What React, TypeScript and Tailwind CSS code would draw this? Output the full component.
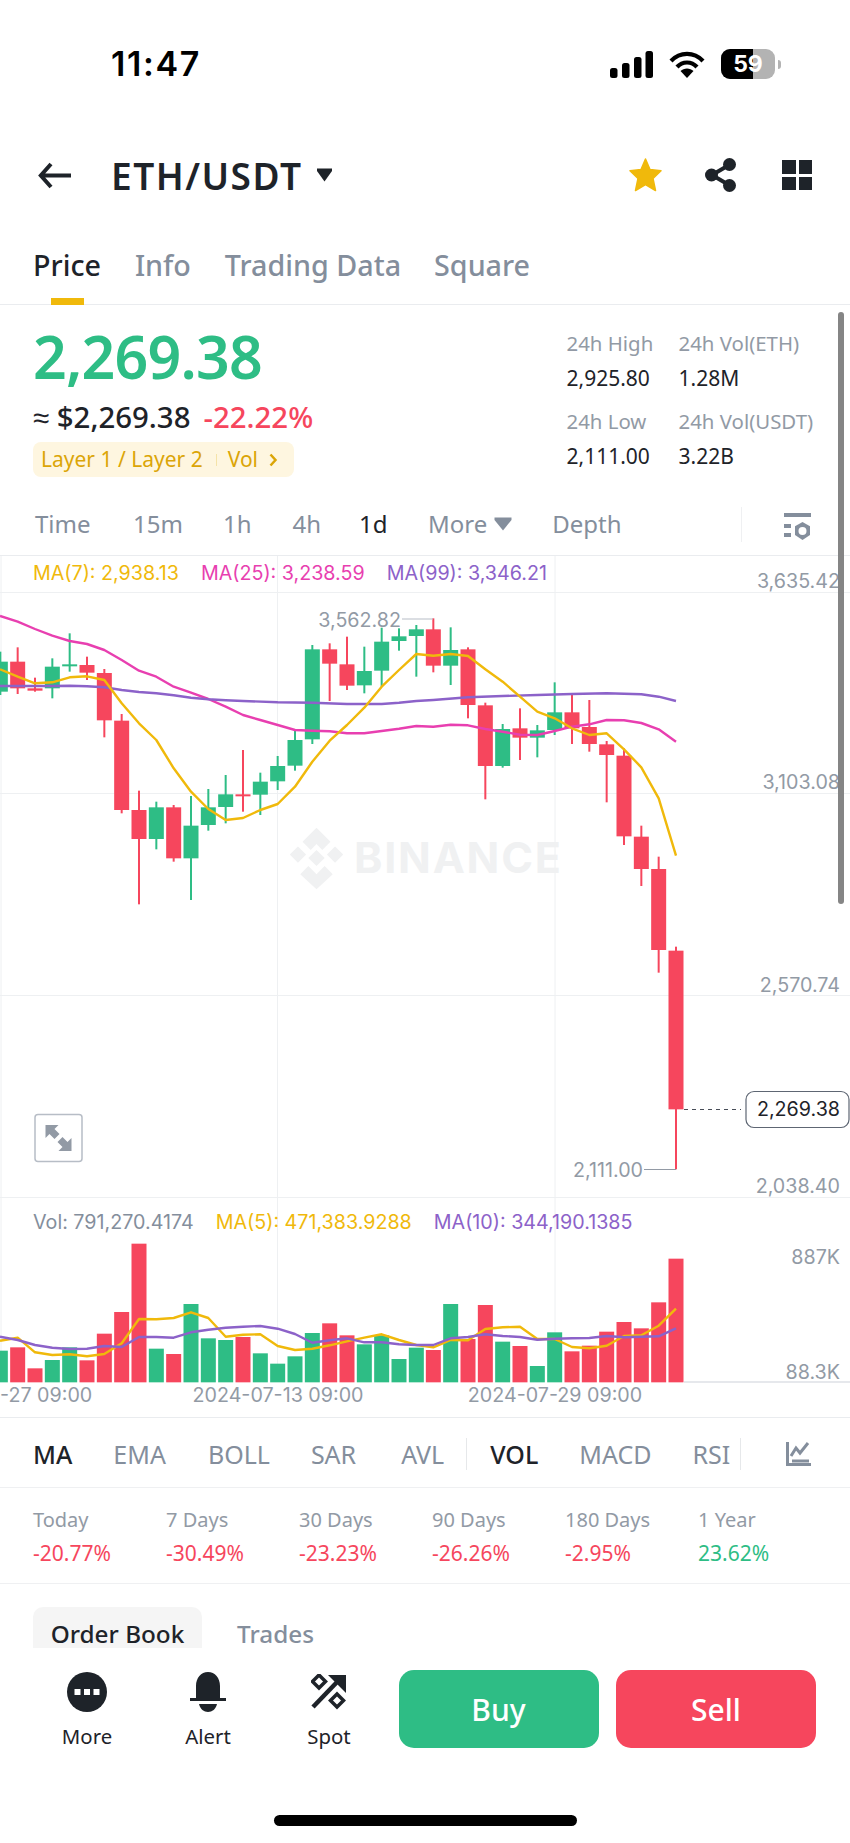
import React from "react";

const G = "#2EBD85";
const R = "#F6465D";
const Y = "#F0B90B";
const P = "#E83FB0";
const V = "#8C62C9";

type C = [number, number, number, number, number, "g" | "r"];
const candles: C[] = [
  [1, 275, 405, 305, 395, "g"], [53, 262, 402, 305, 385, "r"], [105, 353, 395, 385, 392, "r"], [157, 295, 415, 320, 385, "g"],
  [209, 220, 335, 313, 318, "g"], [261, 290, 360, 315, 338, "r"], [313, 327, 532, 339, 481, "r"], [365, 462, 760, 482, 750, "r"],
  [417, 692, 1033, 750, 837, "r"], [469, 725, 868, 742, 837, "g"], [521, 735, 905, 742, 895, "r"], [573, 708, 1020, 797, 895, "g"],
  [625, 687, 812, 742, 795, "g"], [677, 645, 790, 703, 741, "g"], [729, 570, 755, 703, 708, "r"], [781, 638, 765, 665, 704, "g"],
  [833, 588, 690, 618, 664, "g"], [885, 510, 632, 540, 617, "g"], [937, 255, 552, 268, 538, "g"], [989, 250, 423, 268, 311, "r"],
  [1041, 230, 390, 313, 377, "r"], [1093, 260, 400, 333, 376, "g"], [1145, 203, 380, 245, 332, "g"], [1197, 205, 272, 229, 243, "g"],
  [1249, 195, 350, 208, 228, "g"], [1300, 175, 337, 208, 317, "r"], [1352, 202, 375, 270, 317, "g"], [1404, 262, 475, 268, 435, "r"],
  [1456, 428, 718, 436, 618, "r"], [1508, 492, 623, 507, 618, "g"], [1560, 445, 600, 505, 533, "r"], [1612, 495, 592, 511, 533, "g"],
  [1664, 367, 525, 457, 510, "g"], [1716, 403, 552, 457, 505, "r"], [1768, 420, 575, 501, 552, "r"], [1820, 543, 727, 553, 585, "r"],
  [1872, 565, 855, 587, 829, "r"], [1924, 797, 978, 830, 927, "r"], [1976, 890, 1238, 927, 1170, "r"], [2028, 1160, 1828, 1172, 1648, "r"],
];

const pts = (a: number[][], base = 560) => a.map(([x, y]) => `${(x / 3).toFixed(1)},${(base + y / 3).toFixed(1)}`).join(" ");

const ma7 = [[0,328],[53,350],[105,370],[157,367],[209,352],[261,349],[313,360],[365,430],[417,490],[469,540],[521,625],[573,695],[625,747],[677,780],[729,774],[781,750],[833,732],[885,680],[937,605],[989,542],[1041,495],[1093,443],[1145,380],[1197,330],[1249,282],[1300,287],[1352,282],[1404,288],[1456,328],[1508,365],[1560,410],[1612,455],[1664,475],[1716,505],[1768,525],[1820,520],[1872,568],[1924,622],[1976,715],[2028,887]];
const ma25 = [[0,168],[53,185],[105,207],[157,227],[209,243],[261,252],[313,270],[365,300],[417,332],[469,350],[521,380],[573,398],[625,417],[677,440],[729,465],[781,480],[833,495],[885,510],[937,512],[989,514],[1041,520],[1093,520],[1145,513],[1197,506],[1249,498],[1300,500],[1352,494],[1404,496],[1456,507],[1508,515],[1560,524],[1612,525],[1664,513],[1716,500],[1768,493],[1820,480],[1872,481],[1924,489],[1976,508],[2028,545]];
const ma99 = [[0,378],[53,378],[157,378],[209,377],[261,379],[313,382],[365,390],[417,396],[469,400],[521,406],[573,413],[625,418],[677,421],[729,423],[833,427],[937,428],[1041,432],[1145,432],[1197,428],[1249,423],[1300,420],[1404,412],[1508,408],[1612,405],[1716,402],[1820,400],[1924,403],[1976,410],[2028,423]];

const vols: [number, number, "g" | "r"][] = [
  [1,482,"g"],[53,472,"r"],[105,535,"r"],[157,510,"g"],[209,472,"g"],[261,511,"r"],[313,431,"r"],[365,366,"r"],[417,161,"r"],[469,476,"g"],[521,492,"r"],[573,342,"g"],[625,445,"g"],[677,450,"g"],[729,441,"r"],[781,490,"g"],[833,521,"g"],[885,499,"g"],[937,429,"g"],[989,400,"r"],[1041,436,"r"],[1093,463,"g"],[1145,436,"g"],[1197,507,"g"],[1249,473,"g"],[1300,480,"r"],[1352,342,"g"],[1404,447,"r"],[1456,345,"r"],[1508,455,"g"],[1560,468,"r"],[1612,528,"g"],[1664,427,"g"],[1716,484,"r"],[1768,467,"r"],[1820,425,"r"],[1872,396,"r"],[1924,415,"r"],[1976,337,"r"],[2028,206,"r"],
];
const v5 = [[0,452],[53,443],[105,487],[157,495],[209,493],[261,499],[313,492],[365,460],[417,387],[469,388],[521,384],[573,367],[625,384],[677,440],[729,434],[781,433],[833,468],[885,480],[937,476],[989,466],[1041,454],[1093,443],[1145,433],[1197,450],[1249,465],[1300,472],[1352,450],[1404,451],[1456,417],[1508,412],[1560,410],[1612,447],[1664,447],[1716,471],[1768,475],[1820,467],[1872,438],[1924,436],[1976,407],[2028,356]];
const v10 = [[0,440],[53,450],[105,465],[157,473],[209,477],[261,476],[313,468],[365,471],[417,441],[469,441],[521,443],[573,427],[625,419],[677,413],[729,410],[781,408],[833,416],[885,432],[937,458],[989,451],[1041,445],[1093,457],[1145,457],[1197,463],[1249,465],[1300,465],[1352,445],[1404,441],[1456,433],[1508,438],[1560,441],[1612,449],[1664,446],[1716,445],[1768,444],[1820,438],[1872,442],[1924,440],[1976,439],[2028,415]];

function Chart() {
  const axis = "font-['Inter',sans-serif] text-[19.7px] fill-[#929AA5]";
  return (
    <svg width={850} height={861} viewBox="0 556 850 861" className="block">
      {[592, 793, 995, 1197].map((y) => (
        <line key={y} x1={0} x2={850} y1={y + 0.5} y2={y + 0.5} stroke="#EEF0F2" strokeWidth={1} />
      ))}
      {[1, 277.5, 555].map((x) => (
        <line key={x} x1={x} x2={x} y1={556} y2={1382} stroke="#EEF0F2" strokeWidth={1} />
      ))}
      <g>
        <path transform="translate(316.5 858) scale(1.16) translate(-316.5 -858)" fill="#F0F1F2" d="M316.5 832 l12 12 -7 7 -5 -5 -5 5 -7 -7z M300.5 848 l7 7 -7 7 -7 -7z M332.5 848 l7 7 -7 7 -7 -7z M316.5 851 l7 7 -7 7 -7 -7z M309.5 865 l7 7 7 -7 7 7 -14 13 -14 -13z" />
        <text x={354} y={873} className="font-['Inter',sans-serif] text-[43px] font-bold tracking-[1.8px] fill-[#F0F1F2]">BINANCE</text>
      </g>
      {candles.map(([x, wt, wb, bt, bb, c]) => {
        const col = c === "g" ? G : R;
        const cx = x / 3;
        return (
          <g key={x}>
            <rect x={cx - 1} y={560 + wt / 3} width={2} height={(wb - wt) / 3} fill={col} />
            <rect x={cx - 7.5} y={560 + bt / 3} width={15} height={Math.max((bb - bt) / 3, 2)} fill={col} />
          </g>
        );
      })}
      <polyline points={pts(ma25)} fill="none" stroke={P} strokeWidth={2.4} strokeLinejoin="round" />
      <polyline points={pts(ma99)} fill="none" stroke={V} strokeWidth={2.4} strokeLinejoin="round" />
      <polyline points={pts(ma7)} fill="none" stroke={Y} strokeWidth={2.4} strokeLinejoin="round" />

      {vols.map(([x, t, c]) => (
        <rect key={x} x={x / 3 - 7.5} y={1190 + t / 3} width={15} height={(577 - t) / 3} fill={c === "g" ? G : R} />
      ))}
      <polyline points={pts(v5, 1190)} fill="none" stroke={Y} strokeWidth={2.4} strokeLinejoin="round" />
      <polyline points={pts(v10, 1190)} fill="none" stroke={V} strokeWidth={2.4} strokeLinejoin="round" />
      <line x1={684} x2={850} y1={1382} y2={1382} stroke="#E6E8EC" strokeWidth={2} />

      <text x={840} y={588} textAnchor="end" className={axis}>3,635.42</text>
      <text x={840} y={789} textAnchor="end" className={axis}>3,103.08</text>
      <text x={840} y={992} textAnchor="end" className={axis}>2,570.74</text>
      <text x={840} y={1193} textAnchor="end" className={axis}>2,038.40</text>
      <text x={840} y={1264} textAnchor="end" className={axis}>887K</text>
      <text x={840} y={1379} textAnchor="end" className={axis}>88.3K</text>

      <text x={401} y={627} textAnchor="end" className={axis}>3,562.82</text>
      <line x1={402} x2={433} y1={619} y2={619} stroke="#B7BDC6" strokeWidth={1} />
      <text x={643} y={1177} textAnchor="end" className={axis}>2,111.00</text>
      <line x1={644} x2={676} y1={1169.5} y2={1169.5} stroke="#929AA5" strokeWidth={1} />

      <line x1={684} x2={741} y1={1109.5} y2={1109.5} stroke="#474D57" strokeWidth={1} strokeDasharray="4 4" />
      <rect x={746} y={1091.5} width={103} height={36} rx={8} fill="#fff" stroke="#5E6673" strokeWidth={1.2} />
      <text x={840} y={1116} textAnchor="end" className="font-['Inter',sans-serif] text-[19.7px] fill-[#1E2329]">2,269.38</text>

      <text x={0} y={1402} className={axis}>-27 09:00</text>
      <text x={278} y={1402} textAnchor="middle" className={axis}>2024-07-13 09:00</text>
      <text x={555} y={1402} textAnchor="middle" className={axis}>2024-07-29 09:00</text>

      <rect x={35} y={1114.5} width={47} height={47} rx={3} fill="#fff" stroke="#B7BDC6" strokeWidth={1.5} />
      <path fill="#929AA5" d="M45.5 1125h13l-4 4 5 5-5 5-5-5-4 4z M71.5 1151h-13l4-4-5-5 5-5 5 5 4-4z" />
    </svg>
  );
}

const periods: [string, string, string][] = [
  ["Today", "-20.77%", R], ["7 Days", "-30.49%", R], ["30 Days", "-23.23%", R],
  ["90 Days", "-26.26%", R], ["180 Days", "-2.95%", R], ["1 Year", "23.62%", G],
];

function Stat({ label, value, w }: { label: string; value: string; w: string }) {
  return (
    <div className={`${w} flex flex-col gap-[11px]`}>
      <div className="text-[20.4px] leading-[24px] text-[#929AA5] whitespace-nowrap">{label}</div>
      <div className="text-[21px] leading-[24px] text-[#1E2329] whitespace-nowrap">{value}</div>
    </div>
  );
}

export default function App() {
  return (
    <div className="relative w-[850px] h-[1843px] overflow-hidden bg-white flex flex-col font-['Noto_Sans',sans-serif] text-[#1E2329]">
      {/* status bar */}
      <div className="h-[128px] flex items-center justify-between pl-[111px] pr-[69px] shrink-0">
        <span className="font-['Inter',sans-serif] text-[34px] font-semibold text-black tracking-[1.6px] -mt-[2px]">11:47</span>
        <div className="flex items-center">
          <svg width={43} height={27} viewBox="0 0 43 27" className="mr-[16px]">
            <rect x={0} y={17} width={7.5} height={10} rx={2.5} fill="#000" />
            <rect x={12} y={12} width={7.5} height={15} rx={2.5} fill="#000" />
            <rect x={24} y={6} width={7.5} height={21} rx={2.5} fill="#000" />
            <rect x={35.5} y={0} width={7.5} height={27} rx={2.5} fill="#000" />
          </svg>
          <svg width={36} height={28} viewBox="0 0 36 28" className="mr-[16px]">
            <path fill="none" stroke="#000" strokeWidth={4.2} d="M2 11 C 11 1.5, 25 1.5, 34 11" />
            <path fill="none" stroke="#000" strokeWidth={4.2} d="M8 17 C 13.5 11, 22.5 11, 28 17" />
            <path fill="#000" d="M18 28 L11.5 21 C 15 17.5, 21 17.5, 24.5 21 Z" />
          </svg>
          <div className="relative w-[54px] h-[30px] rounded-[9px] bg-[#B3B3B3] overflow-hidden">
            <div className="h-full w-[32px] bg-black" />
            <span className="absolute inset-0 flex items-center justify-center font-['Inter',sans-serif] text-[23px] font-bold text-white">59</span>
          </div>
          <div className="w-[3px] h-[9px] ml-[3px] bg-[#B3B3B3] rounded-r-full" />
        </div>
      </div>

      {/* header */}
      <div className="h-[94px] flex items-center shrink-0">
        <svg width={33} height={27} viewBox="0 0 33 27" className="ml-[38px]">
          <path d="M13 2 L2.8 13.5 L13 25 M3 13.5 H33" fill="none" stroke="#1E2329" strokeWidth={4} />
        </svg>
        <span className="ml-[40px] text-[37px] font-semibold leading-none whitespace-nowrap tracking-[1.5px]">ETH/USDT</span>
        <svg width={17} height={14} viewBox="0 0 17 14" className="ml-[14px]">
          <path d="M1 0.5 H16 V3 L8.5 13.5 L1 3 Z" fill="#1E2329" strokeLinejoin="round" />
        </svg>
        <div className="ml-auto flex items-center pr-[38px]">
          <svg width={33} height={34} viewBox="0 0 33 34">
            <path d="M16.5 1 L21 11.5 L32 12.8 L24 20.5 L26.5 32.5 L16.5 26.5 L6.5 32.5 L9 20.5 L1 12.8 L12 11.5 Z" fill={Y} stroke={Y} strokeWidth={1.5} strokeLinejoin="round" />
          </svg>
          <svg width={31} height={34} viewBox="0 0 31 34" className="ml-[43px]">
            <path d="M7 17 L24 7 M7 17 L24 27" stroke="#1E2329" strokeWidth={4} fill="none" />
            <circle cx={6.5} cy={17} r={6.5} fill="#1E2329" />
            <circle cx={24.5} cy={6.5} r={6.5} fill="#1E2329" />
            <circle cx={24.5} cy={27.5} r={6.5} fill="#1E2329" />
          </svg>
          <div className="ml-[46px] grid grid-cols-2 gap-[3px] w-[30px]">
            <div className="h-[13.5px] bg-[#1E2329]" />
            <div className="h-[13.5px] bg-[#1E2329]" />
            <div className="h-[13.5px] bg-[#1E2329]" />
            <div className="h-[13.5px] bg-[#1E2329]" />
          </div>
        </div>
      </div>

      {/* tabs */}
      <div className="h-[83px] border-b border-[#EAECEF] flex items-start pl-[33px] gap-[34px] shrink-0 pt-[23px] text-[28.7px] leading-[40px] font-medium">
        <div className="relative h-[60px] text-[#1E2329]">
          Price
          <div className="absolute left-[18px] top-[52.5px] w-[33px] h-[7px] bg-[#F0B90B]" />
        </div>
        <div className="text-[#848E9C]">Info</div>
        <div className="text-[#848E9C]">Trading Data</div>
        <div className="text-[#848E9C] -ml-[1px]">Square</div>
      </div>

      {/* price */}
      <div className="h-[195px] relative flex shrink-0">
        <div className="pl-[33px] w-[566.5px] shrink-0">
          <div className="text-[59px] leading-[64px] font-semibold text-[#2EBD85] mt-[19px] tracking-[-0.8px]">2,269.38</div>
          <div className="flex items-baseline mt-[10px] text-[29.4px] leading-[38px]">
            <span className="font-medium">≈ $2,269.38</span>
            <span className="ml-[13px] font-medium text-[#F6465D]">-22.22%</span>
          </div>
          <div className="mt-[6px] w-[261px] h-[35px] rounded-[8px] bg-[#FEF6E0] flex items-center pl-[8px] text-[21px] text-[#DBA507] leading-none">
            <span>Layer 1 / Layer 2</span>
            <span className="ml-[13px] w-[1px] h-[12px] bg-[#F5E3A8]" />
            <span className="ml-[11px]">Vol</span>
            <svg width={9} height={14} viewBox="0 0 9 14" className="ml-[11px]">
              <path d="M1.5 1.5 L6.5 7 L1.5 12.5" fill="none" stroke="#DBA507" strokeWidth={2.5} />
            </svg>
          </div>
        </div>
        <div className="pt-[26px] flex flex-col gap-[19px]">
          <div className="flex">
            <Stat w="w-[112px]" label="24h High" value="2,925.80" />
            <Stat w="w-[140px]" label="24h Vol(ETH)" value="1.28M" />
          </div>
          <div className="flex">
            <Stat w="w-[112px]" label="24h Low" value="2,111.00" />
            <Stat w="w-[140px]" label="24h Vol(USDT)" value="3.22B" />
          </div>
        </div>
      </div>

      {/* intervals */}
      <div className="h-[56px] border-b border-[#EAECEF] flex items-start shrink-0 text-[24px] leading-[48px] text-[#848E9C] relative">
        <span className="ml-[35px] w-[54px]">Time</span>
        <span className="ml-[44px]">15m</span>
        <span className="ml-[40px]">1h</span>
        <span className="ml-[41px]">4h</span>
        <span className="ml-[38px] text-[#1E2329]">1d</span>
        <span className="ml-[40.5px]">More</span>
        <svg width={18} height={14} viewBox="0 0 18 14" className="ml-[7px] mt-[17px]">
          <path d="M0.5 0.5 H17.5 V3 L9 13.5 L0.5 3 Z" fill="#848E9C" />
        </svg>
        <span className="ml-[40px]">Depth</span>
        <div className="ml-auto mr-[39px] mt-[10px] flex items-center">
          <div className="w-[1px] h-[35px] bg-[#EFF0F2] mr-[42px] -mt-[3px]" />
          <svg width={27} height={27} viewBox="0 0 27 27">
            <rect x={0} y={0} width={27} height={4} fill="#848E9C" />
            <rect x={0} y={11} width={7} height={4} fill="#848E9C" />
            <rect x={0} y={20} width={7} height={4} fill="#848E9C" />
            <path d="M18.5 9 L26 13.2 V22 L18.5 27 L11 22 V13.2 Z" fill="#848E9C" />
            <circle cx={18.5} cy={18} r={4} fill="#fff" />
          </svg>
        </div>
      </div>

      {/* chart */}
      <div className="relative h-[861px] shrink-0 border-b border-[#EAECEF] box-content">
        <Chart />
        <div className="absolute left-[33px] top-[5px] flex gap-[22px] font-['Inter',sans-serif] text-[19.7px] leading-[24px] whitespace-nowrap">
          <span className="text-[#F0B90B]">MA(7): 2,938.13</span>
          <span className="text-[#E83FB0]">MA(25): 3,238.59</span>
          <span className="text-[#8C62C9]">MA(99): 3,346.21</span>
        </div>
        <div className="absolute left-[33px] top-[654px] flex gap-[22px] font-['Inter',sans-serif] text-[19.7px] leading-[24px] whitespace-nowrap">
          <span className="text-[#848E9C]">Vol: 791,270.4174</span>
          <span className="text-[#F0B90B]">MA(5): 471,383.9288</span>
          <span className="text-[#8C62C9]">MA(10): 344,190.1385</span>
        </div>
      </div>

      {/* indicators */}
      <div className="h-[70px] border-b border-[#EFF0F2] flex items-center pt-[3px] shrink-0 text-[25px] text-[#848E9C] leading-none">
        <span className="ml-[33px] text-[#1E2329] font-medium">MA</span>
        <span className="ml-[41px]">EMA</span>
        <span className="ml-[42px]">BOLL</span>
        <span className="ml-[41px]">SAR</span>
        <span className="ml-[45px]">AVL</span>
        <span className="ml-[22px] w-[1px] h-[32px] bg-[#E6E8EA]" />
        <span className="ml-[23px] text-[#1E2329] font-medium">VOL</span>
        <span className="ml-[41px]">MACD</span>
        <span className="ml-[41px]">RSI</span>
        <span className="ml-[10px] w-[1px] h-[32px] bg-[#E6E8EA]" />
        <svg width={25} height={24} viewBox="0 0 25 24" className="ml-[45px]">
          <path d="M1.5 0 V22.5 H25" fill="none" stroke="#848E9C" strokeWidth={3} />
          <path d="M5 14 L10 6 L14 11 L22 1" fill="none" stroke="#848E9C" strokeWidth={3} />
          <path d="M6 19 H23" stroke="#848E9C" strokeWidth={3} />
        </svg>
      </div>

      {/* periods */}
      <div className="h-[96px] border-b border-[#EFF0F2] flex pl-[33px] pt-[20px] shrink-0">
        {periods.map(([l, v, c]) => (
          <div key={l} className="w-[133px] flex flex-col gap-[9px] leading-[24px]">
            <span className="text-[20px] text-[#929AA5]">{l}</span>
            <span className="text-[21px]" style={{ color: c }}>{v}</span>
          </div>
        ))}
      </div>

      {/* order book tabs */}
      <div className="h-[64px] flex items-end pl-[33px] shrink-0 text-[24.3px] leading-none font-medium">
        <div className="w-[169px] h-[41px] bg-[#F5F5F5] rounded-t-[10px] flex items-center justify-center pt-[13px]">Order Book</div>
        <div className="ml-[35px] h-[41px] flex items-center pt-[13px] text-[#848E9C]">Trades</div>
      </div>

      {/* bottom bar */}
      <div className="flex-1 relative pl-[33px] pt-[22px] flex items-start">
        <div className="w-[108px] flex flex-col items-center text-[20.4px] leading-[30px]">
          <svg width={40} height={40} viewBox="0 0 40 40" className="mt-[2px]">
            <circle cx={20} cy={20} r={20} fill="#1E2329" />
            <rect x={7.5} y={17} width={6} height={6} fill="#fff" />
            <rect x={17} y={17} width={6} height={6} fill="#fff" />
            <rect x={26.5} y={17} width={6} height={6} fill="#fff" />
          </svg>
          <span className="mt-[9px]">More</span>
        </div>
        <div className="w-[134px] flex flex-col items-center text-[20.4px] leading-[30px]">
          <svg width={36} height={40} viewBox="0 0 36 40" className="mt-[2px]">
            <path d="M6 26 V14 C6 6 11 0 18 0 C25 0 30 6 30 14 V26 H36 V29 H0 V26 Z" fill="#1E2329" />
            <path d="M9 32 H27 C26 37 22 40 18 40 C14 40 10 37 9 32 Z" fill="#1E2329" />
          </svg>
          <span className="mt-[9px]">Alert</span>
        </div>
        <div className="w-[108px] flex flex-col items-center text-[20.4px] leading-[30px]">
          <svg width={36} height={36} viewBox="0 0 36 36" className="mt-[4px]">
            <path d="M2 33 L28 6" stroke="#1E2329" strokeWidth={4.5} fill="none" />
            <path d="M17 1 H35 V19 Z" fill="#1E2329" />
            <path d="M8 1 L14.5 7.5 L8 14 L1.5 7.5 Z" fill="none" stroke="#1E2329" strokeWidth={3.5} />
            <path d="M26 20 L32.5 26.5 L26 33 L19.5 26.5 Z" fill="none" stroke="#1E2329" strokeWidth={3.5} />
          </svg>
          <span className="mt-[11px]">Spot</span>
        </div>
        <div className="absolute left-[398.5px] top-[22px] flex gap-[17.5px]">
          <div className="w-[200px] h-[78px] rounded-[15px] bg-[#2EBD85] text-white text-[30px] font-medium flex items-center justify-center">Buy</div>
          <div className="w-[200px] h-[78px] rounded-[15px] bg-[#F6465D] text-white text-[30px] font-medium flex items-center justify-center">Sell</div>
        </div>
      </div>

      {/* scrollbar */}
      <div className="absolute left-[838px] top-[312px] w-[6px] h-[592px] rounded-full bg-[#858585]" />
      {/* home indicator */}
      <div className="absolute left-[274px] top-[1815px] w-[303px] h-[11px] rounded-full bg-black" />
    </div>
  );
}
